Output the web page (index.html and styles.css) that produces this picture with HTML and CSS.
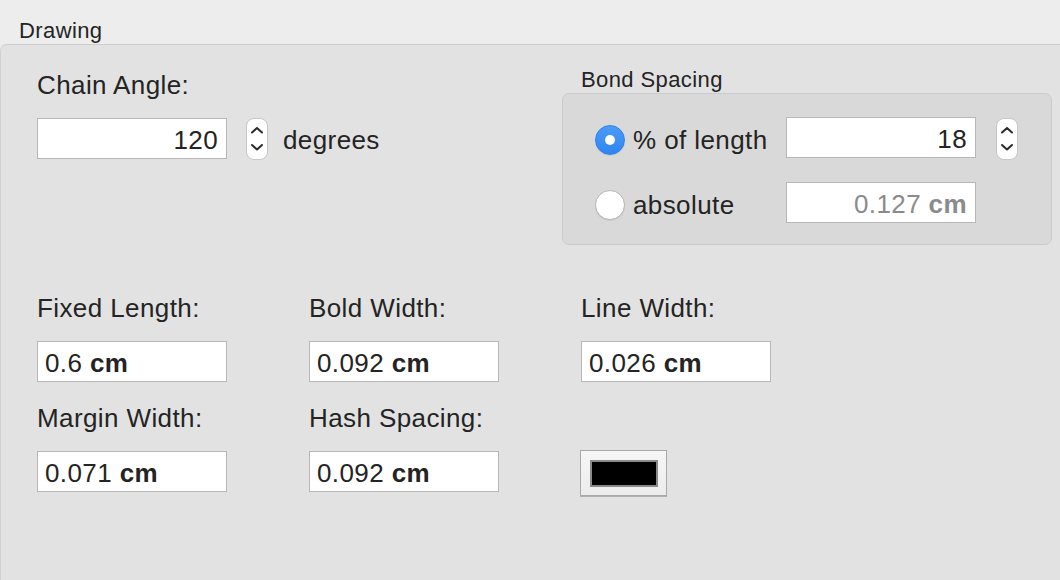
FILE: index.html
```html
<!DOCTYPE html>
<html>
<head>
<meta charset="utf-8">
<link rel="stylesheet" href="styles.css">
</head>
<body>
<div class="window">
  <div class="tabbar"><span class="tab-title">Drawing</span></div>
  <div class="panel">
    <div class="top">
      <div class="chain">
        <div class="label">Chain Angle:</div>
        <div class="field-row">
          <div class="field num">120</div>
          <svg class="stepper" width="22" height="42" viewBox="0 0 22 42"><rect x="0.5" y="0.5" width="21" height="41" rx="7.5" fill="#fff" stroke="#c6c6c6"/><path d="M6 14.5 L11 10 L16 14.5" fill="none" stroke="#2a2a2a" stroke-width="2" stroke-linecap="round" stroke-linejoin="round"/><path d="M6 27 L11 31.5 L16 27" fill="none" stroke="#2a2a2a" stroke-width="2" stroke-linecap="round" stroke-linejoin="round"/></svg>
          <span class="unit">degrees</span>
        </div>
      </div>
      <div class="bond">
        <div class="group-title">Bond Spacing</div>
        <div class="group">
          <div class="opt"><span class="radio on"></span><span>% of length</span></div>
          <div class="field num">18</div>
          <svg class="stepper s2" width="22" height="42" viewBox="0 0 22 42"><rect x="0.5" y="0.5" width="21" height="41" rx="7.5" fill="#fff" stroke="#c6c6c6"/><path d="M6 14.5 L11 10 L16 14.5" fill="none" stroke="#2a2a2a" stroke-width="2" stroke-linecap="round" stroke-linejoin="round"/><path d="M6 27 L11 31.5 L16 27" fill="none" stroke="#2a2a2a" stroke-width="2" stroke-linecap="round" stroke-linejoin="round"/></svg>
          <div class="opt"><span class="radio"></span><span>absolute</span></div>
          <div class="field num disabled">0.127 <b>cm</b></div>
        </div>
      </div>
    </div>
    <div class="grid">
      <div class="cell">
        <div class="label">Fixed Length:</div>
        <div class="field">0.6 <b>cm</b></div>
      </div>
      <div class="cell">
        <div class="label">Bold Width:</div>
        <div class="field">0.092 <b>cm</b></div>
      </div>
      <div class="cell">
        <div class="label">Line Width:</div>
        <div class="field">0.026 <b>cm</b></div>
      </div>
      <div class="cell">
        <div class="label">Margin Width:</div>
        <div class="field">0.071 <b>cm</b></div>
      </div>
      <div class="cell">
        <div class="label">Hash Spacing:</div>
        <div class="field">0.092 <b>cm</b></div>
      </div>
      <div class="cell">
        <div class="label"></div>
        <div class="well"><div class="swatch"></div></div>
      </div>
    </div>
  </div>
</div>
</body>
</html>
```
FILE: styles.css
```css
html, body {
  margin: 0;
  padding: 0;
}
body {
  width: 1060px;
  height: 580px;
  overflow: hidden;
  background: #ececec;
  font-family: "Liberation Sans", Arial, sans-serif;
  color: #242424;
  letter-spacing: 0.4px;
}
.window {
  display: flex;
  flex-direction: column;
  height: 580px;
}
.tabbar {
  height: 44px;
  box-sizing: border-box;
  padding: 20px 0 0 19px;
  background: #ededed;
}
.tab-title {
  font-size: 22px;
  line-height: 22px;
  display: block;
}
.panel {
  flex: 1;
  background: #e2e2e2;
  border-top: 1px solid #cdcdcd;
  border-left: 1px solid #d2d2d2;
  border-top-left-radius: 7px;
  padding: 24px 0 0 36px;
}
.top {
  display: flex;
}
.chain {
  width: 525px;
  padding-top: 1px;
}
.label {
  font-size: 26px;
  line-height: 30px;
  height: 30px;
  margin-bottom: 18px;
}
.field-row {
  display: flex;
  align-items: flex-start;
}
.field {
  width: 190px;
  height: 41px;
  box-sizing: border-box;
  background: #fff;
  border: 1px solid #b8b8b8;
  padding: 4px 8px 0 7px;
  font-size: 26px;
  line-height: 35px;
  white-space: nowrap;
}
.field b {
  font-weight: bold;
}
.num {
  text-align: right;
}
.disabled {
  color: #8b8b8b;
}
.stepper {
  display: block;
  margin-left: 19px;
}
.unit {
  font-size: 26px;
  line-height: 37px;
  padding-top: 4px;
  margin-left: 15px;
}
.bond {
  width: 490px;
}
.group-title {
  font-size: 22px;
  line-height: 22px;
  margin: 0 0 2px 19px;
}
.group {
  box-sizing: border-box;
  height: 152px;
  background: #d9d9d9;
  border: 1px solid #cbcbcb;
  border-radius: 7px;
  padding: 23px 0 0 32px;
  display: grid;
  grid-template-columns: 191px 190px 42px;
  grid-template-rows: 41px 41px;
  row-gap: 24px;
}
.group .stepper {
  margin-left: 20px;
  margin-top: 1px;
}
.opt {
  display: flex;
  align-items: center;
  height: 41px;
  box-sizing: border-box;
  padding-top: 5px;
  font-size: 26px;
}
.radio {
  width: 30px;
  height: 30px;
  box-sizing: border-box;
  border-radius: 50%;
  margin-right: 8px;
  background: #fff;
  border: 1px solid #b6b6b6;
  box-shadow: 0 1px 1px rgba(0,0,0,0.08);
  display: flex;
  align-items: center;
  justify-content: center;
  flex: none;
}
.radio.on {
  background: linear-gradient(#4a9cf8, #2f85f1);
  border-color: #2f80ea;
}
.radio.on::after {
  content: "";
  width: 10px;
  height: 10px;
  border-radius: 50%;
  background: #fff;
}
.grid {
  margin-top: 48px;
  display: grid;
  grid-template-columns: repeat(3, 190px);
  column-gap: 82px;
  row-gap: 21px;
}
.well {
  width: 87px;
  height: 46px;
  box-sizing: border-box;
  margin: -1px 0 0 -1px;
  border: 1px solid #a8a8a8;
  background: linear-gradient(#f6f6f6, #ececec);
  box-shadow: 0 1px 0 #b0b0b0;
  padding: 9px 0 0 9px;
}
.swatch {
  width: 68px;
  height: 27px;
  box-sizing: border-box;
  background: #000;
  border: 2px solid #8a8a8a;
}
```
